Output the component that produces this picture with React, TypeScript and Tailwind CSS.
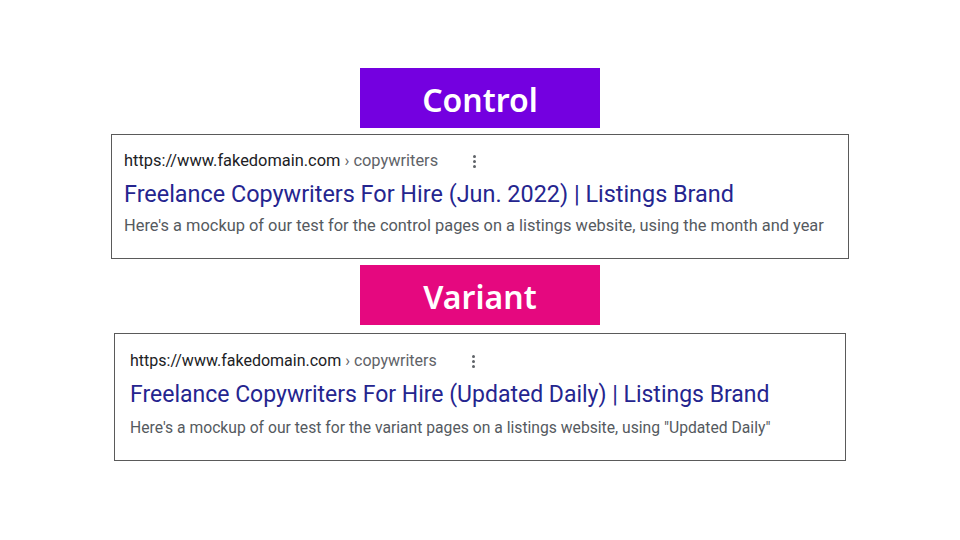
type Result = {
  path: string;
  title: string;
  desc: string;
};

const control: Result = {
  path: "copywriters",
  title: "Freelance Copywriters For Hire (Jun. 2022) | Listings Brand",
  desc: "Here's a mockup of our test for the control pages on a listings website, using the month and year",
};

const variant: Result = {
  path: "copywriters",
  title: "Freelance Copywriters For Hire (Updated Daily) | Listings Brand",
  desc: 'Here\'s a mockup of our test for the variant pages on a listings website, using "Updated Daily"',
};

type Sizes = {
  url: string;
  title: string;
  desc: string;
};

function Kebab() {
  return (
    <span className="ml-[35px] flex flex-col items-center gap-[2px]" aria-hidden="true">
      <span className="h-[3px] w-[3px] rounded-full bg-[#5f6368]" />
      <span className="h-[3px] w-[3px] rounded-full bg-[#5f6368]" />
      <span className="h-[3px] w-[3px] rounded-full bg-[#5f6368]" />
    </span>
  );
}

function SearchResult({ result, sizes, className }: { result: Result; sizes: Sizes; className: string }) {
  return (
    <div className={`border border-[#5a5a5a] bg-white font-['Roboto',sans-serif] ${className}`}>
      <div className={`flex items-center leading-[20px] ${sizes.url}`}>
        <span className="text-[#202124]">https://www.fakedomain.com</span>
        <span className="ml-[4px] text-[#5f6368]">› {result.path}</span>
        <Kebab />
      </div>
      <h3 className={`leading-[30px] text-[#25258f] ${sizes.title}`}>{result.title}</h3>
      <p className={`leading-[20px] text-[#555a60] ${sizes.desc}`}>{result.desc}</p>
    </div>
  );
}

function Label({ text, color }: { text: string; color: string }) {
  return (
    <div
      className={`mx-auto flex h-[60px] w-[240px] items-center justify-center pt-[3px] ${color} font-['Noto_Sans','Open_Sans',sans-serif] text-[32px] font-semibold text-white`}
    >
      {text}
    </div>
  );
}

export default function App() {
  return (
    <div className="h-[540px] w-[960px] bg-white pt-[68px]">
      <Label text="Control" color="bg-[#7400e0]" />
      <SearchResult
        result={control}
        sizes={{ url: "text-[16.4px]", title: "mt-[8px] text-[23.4px]", desc: "mt-[7px] text-[16.4px]" }}
        className="mx-auto mt-[6px] h-[125px] w-[738px] pl-[12px] pt-[16px]"
      />
      <div className="mt-[6px]">
        <Label text="Variant" color="bg-[#e5087f]" />
      </div>
      <SearchResult
        result={variant}
        sizes={{ url: "text-[16px]", title: "mt-[9px] text-[23px]", desc: "mt-[8px] text-[15.7px]" }}
        className="mx-auto mt-[8px] h-[128px] w-[732px] pl-[15px] pt-[17px]"
      />
    </div>
  );
}
